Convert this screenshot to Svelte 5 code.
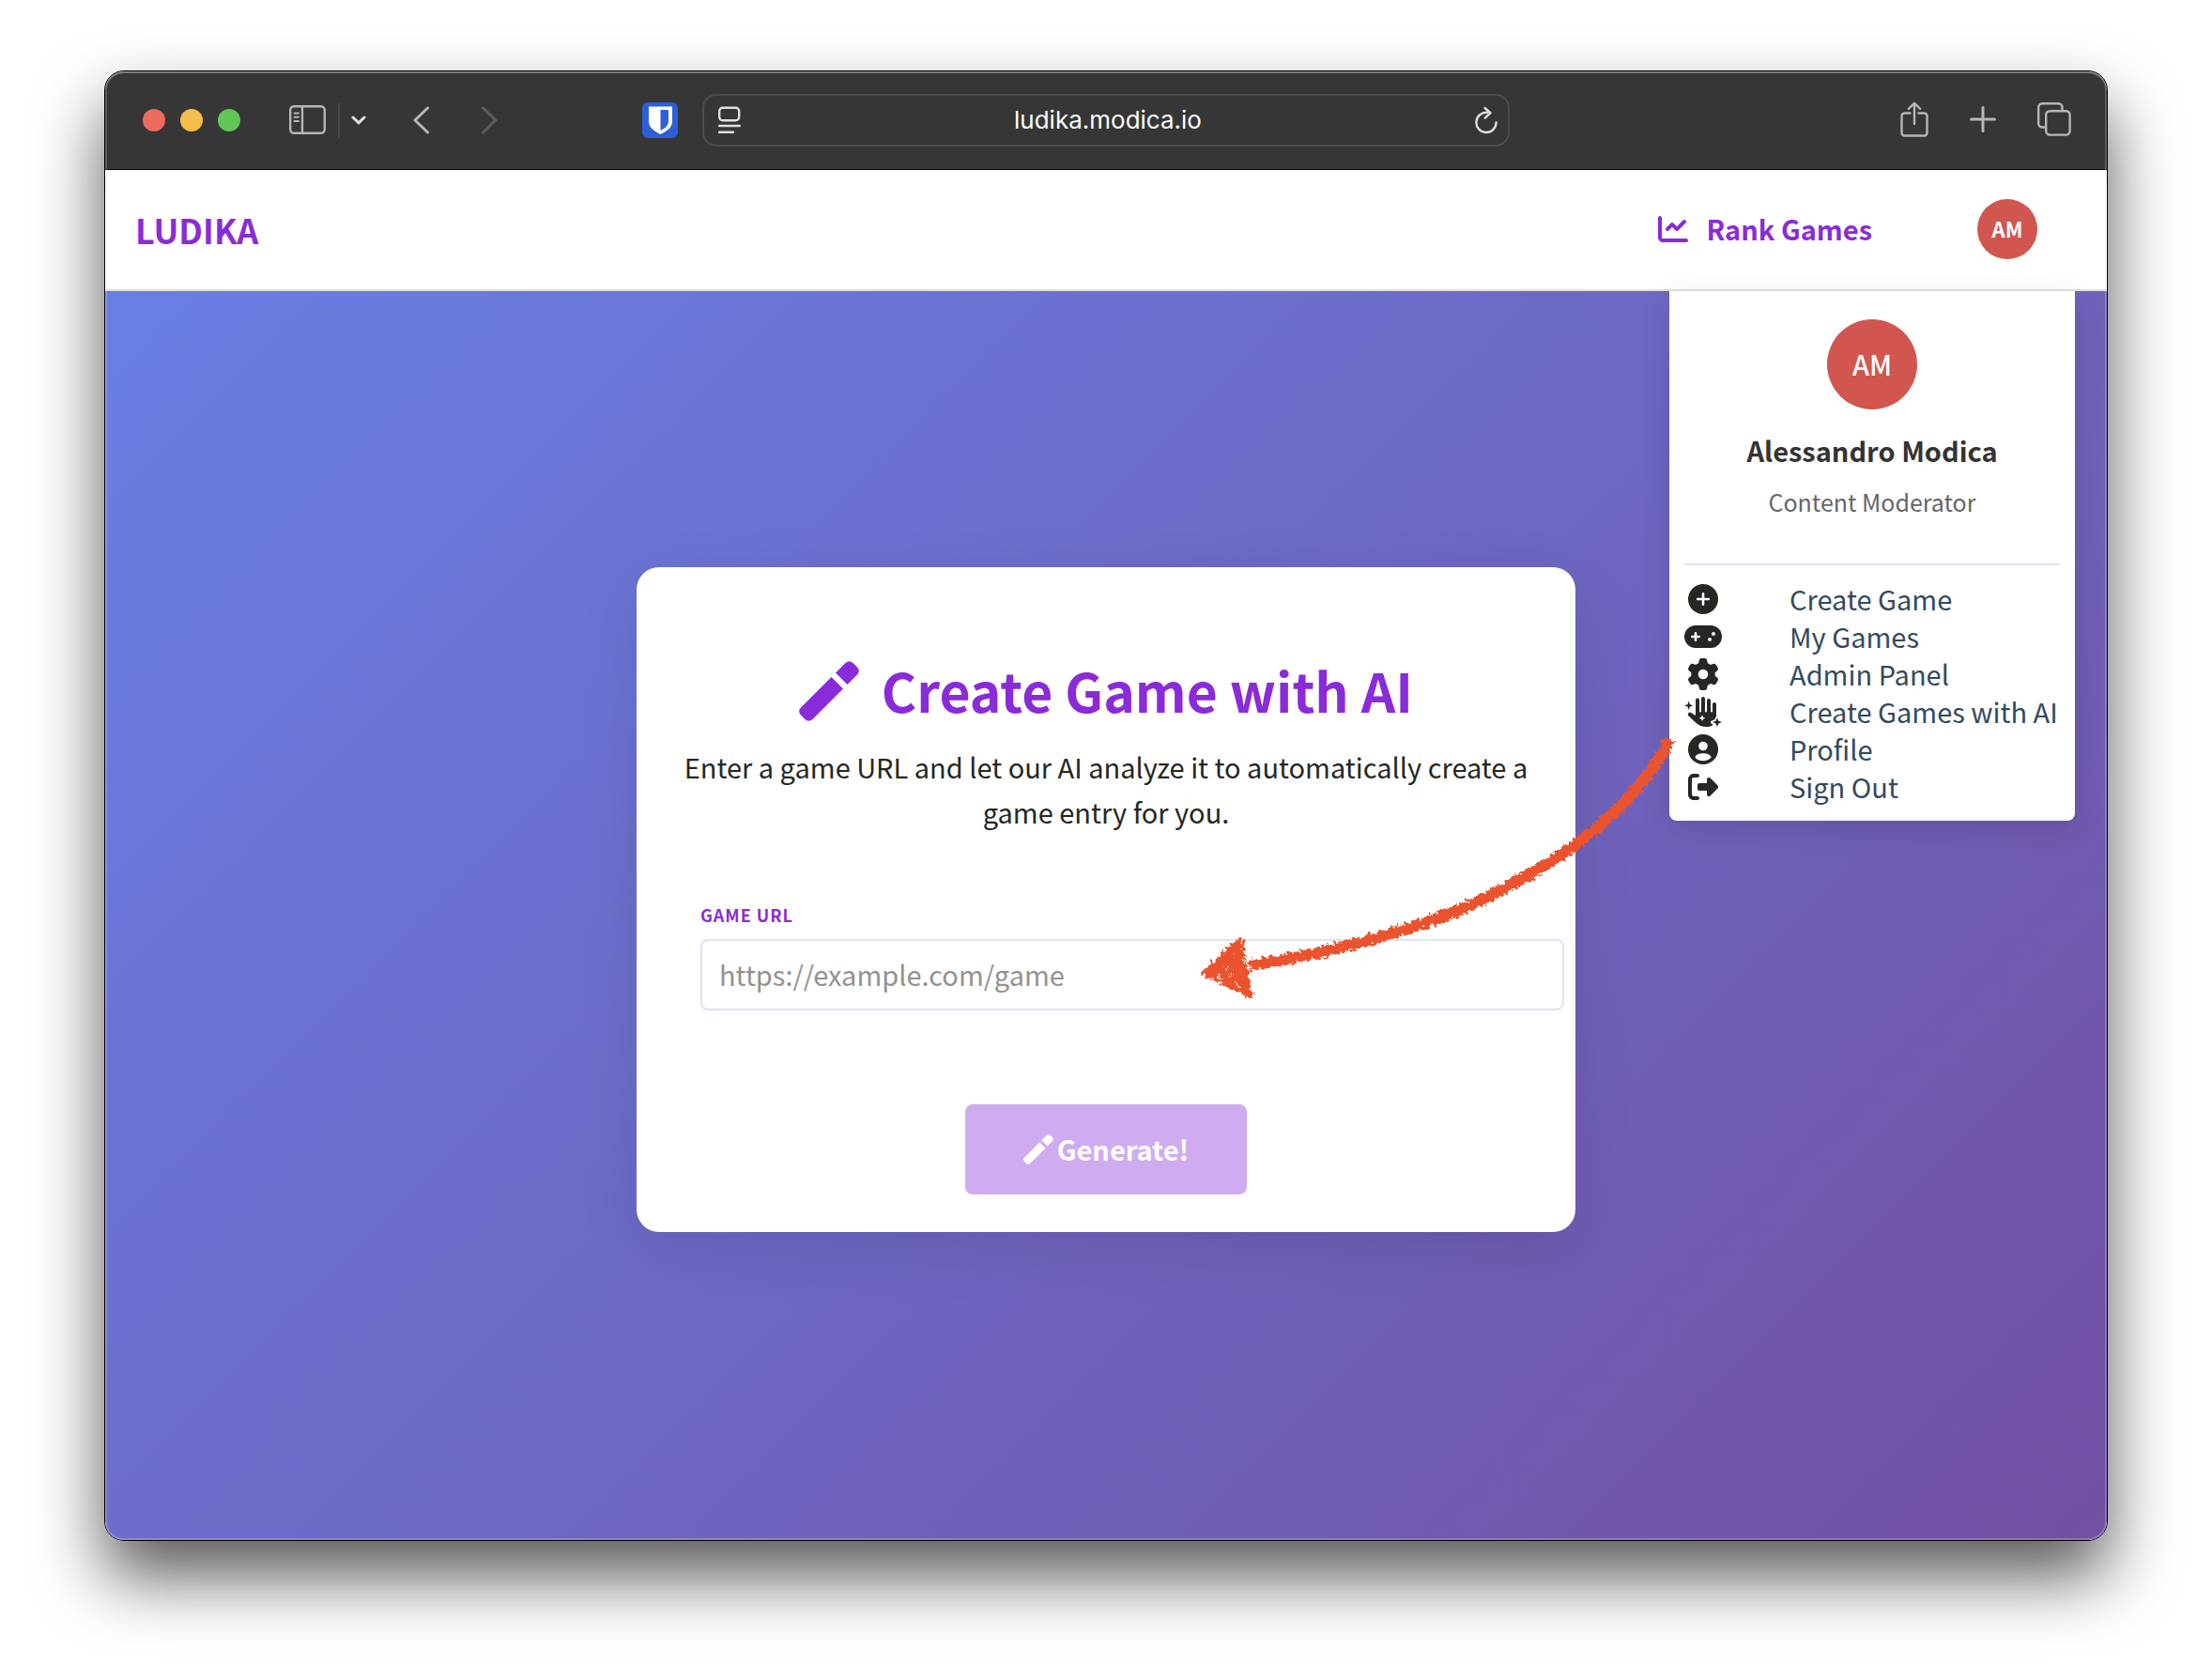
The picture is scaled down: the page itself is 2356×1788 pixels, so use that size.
<script>
  let url = $state('');

  const menu = [
    { icon: 'plus', label: 'Create Game' },
    { icon: 'gamepad', label: 'My Games' },
    { icon: 'gear', label: 'Admin Panel' },
    { icon: 'hand', label: 'Create Games with AI' },
    { icon: 'user', label: 'Profile' },
    { icon: 'exit', label: 'Sign Out' }
  ];
</script>

{#snippet pencil()}
  <svg class="pencil" viewBox="0 0 64 64" aria-hidden="true">
    <path d="M34.5 17 47 29.5 14.5 62Q10.3 65.6 6.5 62L2 57.5Q-1.6 53.5 2 49.5Z" />
    <path d="M39 12.5 49.5 2Q53.5-1.5 57.5 2L62 6.5Q65.5 10.5 62 14.5L51.5 25Z" />
  </svg>
{/snippet}

{#snippet menuIcon(name)}
  {#if name === 'plus'}
    <svg viewBox="0 0 40 34" aria-hidden="true">
      <circle cx="20" cy="17" r="16" />
      <path class="cut" d="M20 11.2v11.6M14.2 17h11.6" />
    </svg>
  {:else if name === 'gamepad'}
    <svg viewBox="0 0 40 34" aria-hidden="true">
      <rect x="0" y="5" width="40" height="24" rx="12" />
      <path class="cut" d="M12 13.3v7.4M8.3 17h7.4" />
      <circle class="hole" cx="27" cy="20" r="2" />
      <circle class="hole" cx="31" cy="14" r="2" />
    </svg>
  {:else if name === 'gear'}
    <svg viewBox="-45 0 602 512" aria-hidden="true">
      <path d="M495.9 166.6c3.2 8.7 .5 18.4-6.4 24.6l-43.3 39.4c1.1 8.3 1.7 16.8 1.7 25.4s-.6 17.1-1.7 25.4l43.3 39.4c6.9 6.2 9.6 15.9 6.4 24.6c-4.4 11.9-9.7 23.3-15.8 34.3l-4.7 8.1c-6.6 11-14 21.4-22.1 31.2c-5.9 7.2-15.7 9.6-24.5 6.8l-55.7-17.7c-13.4 10.3-28.2 18.9-44 25.4l-12.5 57.1c-2 9.1-9 16.3-18.2 17.8c-13.8 2.3-28 3.5-42.5 3.5s-28.7-1.2-42.5-3.5c-9.2-1.5-16.2-8.7-18.2-17.8l-12.5-57.1c-15.8-6.5-30.6-15.1-44-25.4L83.1 425.9c-8.8 2.8-18.6 .3-24.5-6.8c-8.1-9.8-15.5-20.2-22.1-31.2l-4.7-8.1c-6.1-11-11.4-22.4-15.8-34.3c-3.2-8.7-.5-18.4 6.4-24.6l43.3-39.4C64.6 273.1 64 264.6 64 256s.6-17.1 1.7-25.4L22.4 191.2c-6.9-6.2-9.6-15.9-6.4-24.6c4.4-11.9 9.7-23.3 15.8-34.3l4.7-8.1c6.6-11 14-21.4 22.1-31.2c5.9-7.2 15.7-9.6 24.5-6.8l55.7 17.7c13.4-10.3 28.2-18.9 44-25.4l12.5-57.1c2-9.1 9-16.3 18.2-17.8C227.3 1.2 241.5 0 256 0s28.7 1.2 42.5 3.5c9.2 1.5 16.2 8.7 18.2 17.8l12.5 57.1c15.8 6.5 30.6 15.1 44 25.4l55.7-17.7c8.8-2.8 18.6-.3 24.5 6.8c8.1 9.8 15.5 20.2 22.1 31.2l4.7 8.1c6.1 11 11.4 22.4 15.8 34.3zM256 336a80 80 0 1 0 0-160 80 80 0 1 0 0 160z" />
    </svg>
  {:else if name === 'hand'}
    <svg viewBox="0 0 40 34" aria-hidden="true">
      <path d="M12 4.500a2 2 0 0 1 4 0V16.500a.9.9 0 0 0 2 0V3a2 2 0 0 1 4 0V16.500a.9.9 0 0 0 2 0V5a2 2 0 0 1 4 0V16.500a.9.9 0 0 0 2 0V9a2 2 0 0 1 4 0V21.500L32.300 25.300 28 27 28 29 30.500 30.800C29 32.700 26.500 33 23.500 33 18.500 33 14.500 31 11.500 28L4.600 21.500A2.200 2.200 0 0 1 7.600 18.200L12 21Z" />
      <path d="M4.700 5.500 6 9.200 9.400 10.300 6 11.500 4.700 15.100 3.400 11.500 0 10.300 3.400 9.200Z" />
      <path d="M35 23.200 36.400 26.700 40 28 36.400 29.400 35 33 33.600 29.400 30 28 33.600 26.700Z" />
      <path class="hole" d="M19 20.300 20 22.700 22.400 23.700 20 24.700 19 27.100 18 24.700 15.600 23.700 18 22.700Z" />
    </svg>
  {:else if name === 'user'}
    <svg viewBox="0 0 40 34" aria-hidden="true">
      <circle cx="20" cy="17" r="16" />
      <circle class="hole" cx="20" cy="13.500" r="4.800" />
      <path class="hole" d="M11.200 25.300C13 22 16.500 21.200 20 21.200S27 22 28.800 25.300C27 28 23.500 29.300 20 29.300S13 28 11.200 25.300Z" />
    </svg>
  {:else}
    <svg viewBox="-64 -16 640 544" aria-hidden="true">
      <path d="M377.900 105.900L500.700 228.700c7.200 7.200 11.300 17.100 11.300 27.300s-4.100 20.100-11.300 27.300L377.900 406.100c-6.400 6.400-15 9.900-24 9.900c-18.700 0-33.900-15.200-33.900-33.900l0-62.100-128 0c-17.700 0-32-14.300-32-32l0-64c0-17.700 14.300-32 32-32l128 0 0-62.100c0-18.700 15.200-33.900 33.900-33.900c9 0 17.600 3.600 24 9.900zM160 96L96 96c-17.700 0-32 14.300-32 32l0 256c0 17.700 14.300 32 32 32l64 0c17.700 0 32 14.300 32 32s-14.300 32-32 32l-64 0c-53 0-96-43-96-96L0 128C0 75 43 32 96 32l64 0c17.700 0 32 14.300 32 32s-14.300 32-32 32z" />
    </svg>
  {/if}
{/snippet}

<div class="desktop">
  <div class="window">
    <header class="toolbar">
      <div class="tools left">
        <div class="lights">
          <button class="light red" aria-label="Close"></button>
          <button class="light yellow" aria-label="Minimize"></button>
          <button class="light green" aria-label="Zoom"></button>
        </div>
        <div class="sidebar-group">
          <button class="tool" aria-label="Show sidebar">
            <svg width="40" height="32" viewBox="0 0 40 32">
              <rect x="1.200" y="1.200" width="36.600" height="28.600" rx="4" />
              <path d="M14 1v29" />
              <path class="thin" d="M5.500 8.500h4.500M5.500 12.800h4.500M5.500 17h4.500" />
            </svg>
          </button>
          <span class="divider"></span>
          <button class="tool bright" aria-label="Tab groups">
            <svg width="16" height="12" viewBox="0 0 16 12"><path class="bold" d="M2 3l6 5.800L14 3" /></svg>
          </button>
        </div>
        <div class="history">
          <button class="tool" aria-label="Back">
            <svg width="18" height="30" viewBox="0 0 18 30"><path class="bold" d="M15.500 2 2 15l13.500 13" /></svg>
          </button>
          <button class="tool dim" aria-label="Forward">
            <svg width="18" height="30" viewBox="0 0 18 30"><path class="bold" d="M2.500 2 16 15 2.500 28" /></svg>
          </button>
        </div>
        <button class="tool shield" aria-label="Password manager">
          <svg width="38" height="38" viewBox="0 0 38 38">
            <rect class="blue" width="38" height="38" rx="6" />
            <path class="white" d="M7 4.500h25V20c0 7-6 10.800-12.500 14C13 30.800 7 27 7 20Z" />
            <path class="blue" d="M19.500 8H28v12c0 4.500-3.500 7.500-8.500 10Z" />
          </svg>
        </button>
      </div>

      <div class="address">
        <button class="tool bright" aria-label="Page menu">
          <svg width="24" height="30" viewBox="0 0 24 30">
            <rect x="1.200" y="1.700" width="21" height="13.600" rx="3.500" />
            <path d="M1 21h22M1 27.800h15" />
          </svg>
        </button>
        <span class="host">ludika.modica.io</span>
        <button class="tool bright" aria-label="Reload">
          <svg width="24" height="30" viewBox="0 0 24 30">
            <path d="M13 6.800A10.600 10.600 0 1 0 22.600 17.500M10.500 2l6 5.200-5.700 5.400" />
          </svg>
        </button>
      </div>

      <div class="tools right">
        <button class="tool" aria-label="Share">
          <svg width="30" height="38" viewBox="0 0 30 38">
            <path d="M10.500 12.500H4.500a3 3 0 0 0-3 3V33.500a3 3 0 0 0 3 3h21a3 3 0 0 0 3-3V15.500a3 3 0 0 0-3-3H19.500M15 24V2M8.800 7.800 15 1.800l6.200 6" />
          </svg>
        </button>
        <button class="tool" aria-label="New tab">
          <svg width="28" height="28" viewBox="0 0 28 28"><path class="bold" d="M14 1.500v25M1.500 14h25" /></svg>
        </button>
        <button class="tool" aria-label="Tab overview">
          <svg width="36" height="36" viewBox="0 0 36 36">
            <rect x="9.200" y="9.200" width="25.400" height="25.400" rx="4" />
            <path d="M9 26.500H5.200a4 4 0 0 1-4-4V5.200a4 4 0 0 1 4-4H22.500a4 4 0 0 1 4 4V9" />
          </svg>
        </button>
      </div>
    </header>

    <nav class="nav">
      <a class="brand" href="#home">LUDIKA</a>
      <div class="nav-right">
        <a class="rank" href="#rank">
          <svg width="32" height="32" viewBox="0 0 512 512" aria-hidden="true">
            <path d="M64 64c0-17.700-14.300-32-32-32S0 46.300 0 64V400c0 44.200 35.800 80 80 80H480c17.700 0 32-14.300 32-32s-14.300-32-32-32H80c-8.800 0-16-7.200-16-16V64zm406.600 86.600c12.500-12.500 12.500-32.800 0-45.300s-32.800-12.500-45.300 0L320 210.700l-57.400-57.400c-12.500-12.500-32.800-12.500-45.300 0l-80 80c-12.500 12.500-12.500 32.800 0 45.300s32.800 12.500 45.300 0L240 221.300l57.400 57.400c12.500 12.500 32.800 12.500 45.300 0l128-128z" />
          </svg>
          <span class="text">Rank Games</span>
        </a>
        <button class="avatar small" aria-label="Account menu"><span class="text">AM</span></button>
      </div>
    </nav>

    <main class="page">
      <section class="card">
        <h1>{@render pencil()}Create Game with AI</h1>
        <p class="lead">
          Enter a game URL and let our AI analyze it to automatically create a game entry for you.
        </p>
        <form onsubmit={(e) => e.preventDefault()}>
          <div class="field">
            <label for="game-url">GAME URL</label>
            <input id="game-url" type="url" placeholder="https://example.com/game" bind:value={url} />
          </div>
          <button class="generate" type="submit" disabled={!url}>{@render pencil()}<span class="text">Generate!</span></button>
        </form>
      </section>

      <aside class="dropdown">
        <div class="profile">
          <span class="avatar large"><span class="text">AM</span></span>
          <strong>Alessandro Modica</strong>
          <span class="role">Content Moderator</span>
        </div>
        <ul>
          {#each menu as item}
            <li><a href="#{item.icon}">{@render menuIcon(item.icon)}<span class="text">{item.label}</span></a></li>
          {/each}
        </ul>
      </aside>

      <svg class="arrow" width="520" height="300" viewBox="1270 770 520 300" aria-hidden="true">
        <defs>
          <filter id="crayon" x="-5%" y="-10%" width="110%" height="120%">
            <feTurbulence type="fractalNoise" baseFrequency="0.25" numOctaves="3" seed="4" result="noise" />
            <feDisplacementMap in="SourceGraphic" in2="noise" scale="11" xChannelSelector="R" yChannelSelector="G" />
          </filter>
        </defs>
        <g filter="url(#crayon)">
          <path class="stroke" d="M1779 787C1765 815 1742 843 1720 864C1702 881 1692 889 1680 898C1657 915 1602 949 1563 965C1502 991 1422 1014 1331 1028" />
          <path class="head" d="M1282 1036 1321 1001 1326 1028 1331 1060Z" />
          <path class="fleck" d="M1305 1029l3 2M1317 1047l3 5M1313 1016l2 3M1324 1020l1 4M1298 1040l4 2M1310 1038l2 1" />
        </g>
      </svg>
    </main>
  </div>
</div>

<style>
  :global(body) {
    margin: 0;
    background: #fff;
  }

  * {
    box-sizing: border-box;
  }

  .desktop {
    display: flex;
    min-height: 100vh;
    padding: 75px 111px 147px;
    overflow: hidden;
    font-family: 'Noto Sans CJK JP', 'Open Sans', sans-serif;
    font-size: 29px;
    line-height: 40px;
    color: #262722;
  }

  .window {
    position: relative;
    display: flex;
    flex: 1;
    flex-direction: column;
    min-width: 0;
    border: 1px solid #000;
    border-radius: 21px;
    overflow: hidden;
    box-shadow: 0 38px 72px rgba(0, 0, 0, 0.65);
  }

  .window::after {
    content: '';
    position: absolute;
    inset: 0;
    border-radius: 20px;
    box-shadow:
      inset 0 0 0 2px rgba(255, 255, 255, 0.2),
      inset 0 2px 0 rgba(255, 255, 255, 0.2);
    pointer-events: none;
  }

  button {
    padding: 0;
    border: 0;
    background: none;
    font: inherit;
    color: inherit;
  }

  a {
    color: inherit;
    text-decoration: none;
  }

  svg {
    display: block;
    flex: none;
  }

  /* Lifts labels so that their capitals centre on the icon beside them. */
  .text {
    padding-bottom: 2px;
  }

  .toolbar {
    display: grid;
    grid-template-columns: 1fr minmax(0, 860px) 1fr;
    align-items: center;
    height: 105px;
    background: #363636;
    border-bottom: 1px solid #000;
  }

  .tools {
    display: flex;
    align-items: center;
  }

  .left {
    padding: 0 26px 0 40px;
  }

  .right {
    justify-content: flex-end;
    gap: 44px;
    padding: 0 38px 2px 0;
  }

  .lights {
    display: flex;
    gap: 16px;
    margin-right: 52px;
  }

  .light {
    width: 24px;
    height: 24px;
    border-radius: 50%;
  }

  .red {
    background: #ed6a5f;
  }

  .yellow {
    background: #f5bf4f;
  }

  .green {
    background: #62c655;
  }

  .sidebar-group {
    display: flex;
    align-items: center;
    gap: 12px;
    margin-right: 50px;
  }

  .divider {
    width: 2px;
    height: 36px;
    background: #4a4a4a;
  }

  .history {
    display: flex;
    gap: 54px;
  }

  .shield {
    margin-left: auto;
  }

  .tool {
    color: #b6b6b6;
  }

  .tool.bright {
    color: #e0e0e0;
  }

  .tool.dim {
    color: #5e5e5e;
  }

  .tool svg {
    fill: none;
    stroke: currentColor;
    stroke-width: 2.4;
    stroke-linecap: round;
    stroke-linejoin: round;
  }

  .tool .bold {
    stroke-width: 3;
  }

  .tool .thin {
    stroke-width: 2;
  }

  .tool .blue {
    fill: #2d5fd8;
    stroke: none;
  }

  .tool .white {
    fill: #fff;
    stroke: none;
  }

  .address {
    display: flex;
    align-items: center;
    justify-content: space-between;
    height: 56px;
    padding: 0 11px 0 15px;
    border: 2px solid #4d4d4d;
    border-radius: 15px;
  }

  .host {
    font-family: Inter, 'Liberation Sans', sans-serif;
    font-size: 26px;
    color: #fff;
  }

  .nav {
    display: flex;
    align-items: center;
    justify-content: space-between;
    height: 129px;
    padding: 0 74px 2px 32px;
    background: #fff;
    border-bottom: 2px solid #e0e0e0;
    font-weight: 700;
    color: #8a2bd9;
  }

  .brand {
    font-size: 36px;
  }

  .nav-right {
    display: flex;
    align-items: center;
    gap: 112px;
  }

  .rank {
    display: flex;
    align-items: center;
    gap: 20px;
  }

  .rank svg {
    fill: currentColor;
  }

  .avatar {
    display: grid;
    place-items: center;
    border-radius: 50%;
    background: #d0564f;
    color: #fff;
  }

  .small {
    width: 64px;
    height: 64px;
    font-size: 22px;
    font-weight: 700;
  }

  .large {
    width: 96px;
    height: 96px;
    font-weight: 500;
  }

  .page {
    position: relative;
    display: flex;
    flex: 1;
    align-items: center;
    justify-content: center;
    padding-bottom: 34px;
    background: linear-gradient(135deg, #697fe4 0%, #7250a3 100%);
  }

  .card {
    width: 1000px;
    max-width: 100%;
    padding-top: 100px;
    padding-bottom: 40px;
    border-radius: 24px;
    background: #fff;
    box-shadow: 0 16px 64px rgba(0, 0, 0, 0.1);
  }

  h1 {
    display: flex;
    align-items: flex-start;
    justify-content: center;
    gap: 24px;
    margin: 0;
    font-size: 57px;
    font-weight: 700;
    line-height: 60px;
    color: #8a2bd9;
  }

  .pencil {
    width: 64px;
    height: 64px;
    fill: currentColor;
  }

  .lead {
    max-width: 904px;
    margin: 24px auto 0;
    line-height: 48px;
    text-align: center;
  }

  .field {
    display: flex;
    flex-direction: column;
    gap: 14px;
    margin: 74px 12px 0 68px;
  }

  label {
    font-size: 18px;
    font-weight: 700;
    line-height: 24px;
    letter-spacing: 1px;
    color: #8a2bd9;
  }

  input {
    height: 76px;
    padding: 0 18px 2px;
    border: 2px solid #dfe4f2;
    border-radius: 8px;
    outline: none;
    font: inherit;
    color: inherit;
  }

  input::placeholder {
    color: #92928f;
    opacity: 1;
  }

  .generate {
    display: flex;
    align-items: center;
    justify-content: center;
    gap: 4px;
    width: 300px;
    height: 96px;
    margin: 100px auto 0;
    border-radius: 8px;
    background: #8a2be2;
    font-weight: 700;
    color: #fff;
  }

  .generate:disabled {
    background: #cfacef;
  }

  .generate .pencil {
    width: 32px;
    height: 32px;
  }

  .dropdown {
    position: absolute;
    top: 0;
    right: 34px;
    width: 432px;
    padding: 30px 16px 16px;
    border-radius: 0 0 8px 8px;
    background: #fff;
    box-shadow: 0 8px 32px rgba(0, 0, 0, 0.12);
  }

  .profile {
    display: flex;
    flex-direction: column;
    align-items: center;
    padding-bottom: 48px;
    border-bottom: 2px solid #dfe4f2;
  }

  .profile strong {
    margin-top: 21px;
    font-weight: 700;
    line-height: 44px;
    color: #333;
  }

  .role {
    margin-top: 15px;
    font-size: 25px;
    line-height: 36px;
    color: #666;
  }

  ul {
    margin: 16px 0 0;
    padding: 0;
    list-style: none;
  }

  li a {
    display: flex;
    align-items: center;
    gap: 72px;
    height: 40px;
    white-space: nowrap;
    color: #34495e;
  }

  li svg {
    width: 40px;
    height: 34px;
    fill: #262722;
  }

  li .hole {
    fill: #fff;
  }

  li .cut {
    fill: none;
    stroke: #fff;
    stroke-width: 2.6;
    stroke-linecap: round;
  }

  .arrow {
    position: absolute;
    top: 460px;
    left: calc(50% + 92px);
    pointer-events: none;
  }

  .arrow path {
    fill: none;
    stroke: #eb532d;
    stroke-width: 12;
  }

  .arrow .head {
    fill: #eb532d;
    stroke-width: 5;
    stroke-linejoin: round;
  }

  .arrow .fleck {
    stroke: #fff;
    stroke-width: 1.5;
  }
</style>
